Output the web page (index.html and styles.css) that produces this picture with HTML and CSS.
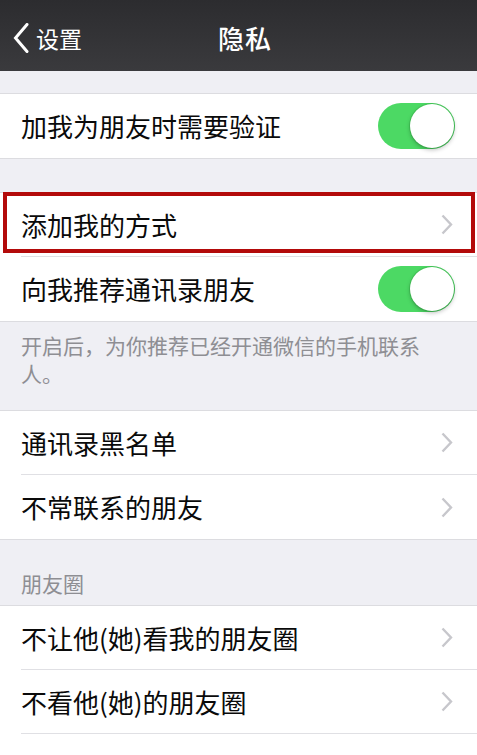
FILE: index.html
```html
<!DOCTYPE html>
<html lang="zh-CN">
<head>
<meta charset="utf-8">
<title>隐私</title>
<link rel="stylesheet" href="styles.css">
</head>
<body>
<header class="nav">
  <a class="back">
    <svg class="back-icon" width="16" height="30" viewBox="0 0 16 30"><polyline points="14,1.5 2.5,15 14,28.5" fill="none" stroke="#fff" stroke-width="3" stroke-linejoin="miter" stroke-linecap="round"/></svg>
    <span>设置</span>
  </a>
  <h1 class="title">隐私</h1>
  <div class="nav-right"></div>
</header>

<main class="page">
  <div class="spacer-top"></div>

  <section class="group">
    <div class="row">
      <div class="row-inner">
        <span class="label">加我为朋友时需要验证</span>
        <span class="switch on"><span class="knob"></span></span>
      </div>
    </div>
  </section>

  <div class="gap"></div>

  <section class="group">
    <div class="row highlighted">
      <div class="row-inner">
        <span class="label">添加我的方式</span>
        <svg class="chev" width="12" height="21" viewBox="0 0 12 21"><polyline points="1.5,1.5 10,10.5 1.5,19.5" fill="none" stroke="#c7c7cc" stroke-width="2.4"/></svg>
      </div>
    </div>
    <div class="row">
      <div class="row-inner">
        <span class="label">向我推荐通讯录朋友</span>
        <span class="switch on"><span class="knob"></span></span>
      </div>
    </div>
  </section>

  <p class="footer">开启后，为你推荐已经开通微信的手机联系人。</p>

  <section class="group">
    <div class="row">
      <div class="row-inner">
        <span class="label">通讯录黑名单</span>
        <svg class="chev" width="12" height="21" viewBox="0 0 12 21"><polyline points="1.5,1.5 10,10.5 1.5,19.5" fill="none" stroke="#c7c7cc" stroke-width="2.4"/></svg>
      </div>
    </div>
    <div class="row">
      <div class="row-inner">
        <span class="label">不常联系的朋友</span>
        <svg class="chev" width="12" height="21" viewBox="0 0 12 21"><polyline points="1.5,1.5 10,10.5 1.5,19.5" fill="none" stroke="#c7c7cc" stroke-width="2.4"/></svg>
      </div>
    </div>
  </section>

  <div class="section-header">朋友圈</div>

  <section class="group">
    <div class="row">
      <div class="row-inner">
        <span class="label">不让他(她)看我的朋友圈</span>
        <svg class="chev" width="12" height="21" viewBox="0 0 12 21"><polyline points="1.5,1.5 10,10.5 1.5,19.5" fill="none" stroke="#c7c7cc" stroke-width="2.4"/></svg>
      </div>
    </div>
    <div class="row">
      <div class="row-inner">
        <span class="label">不看他(她)的朋友圈</span>
        <svg class="chev" width="12" height="21" viewBox="0 0 12 21"><polyline points="1.5,1.5 10,10.5 1.5,19.5" fill="none" stroke="#c7c7cc" stroke-width="2.4"/></svg>
      </div>
    </div>
    <div class="row">
      <div class="row-inner"></div>
    </div>
  </section>
</main>
</body>
</html>
```

FILE: styles.css
```css
* { box-sizing: border-box; }

html, body {
  margin: 0;
  padding: 0;
}

body {
  background: #efeff4;
  font-family: "Noto Sans CJK SC", "Noto Sans", sans-serif;
  color: #000;
  overflow: hidden;
}

.nav {
  height: 71px;
  background: linear-gradient(#2c2c2f, #3a3a3d);
  display: grid;
  grid-template-columns: 1fr auto 1fr;
  align-items: center;
  padding: 5px 0 0 13px;
  color: #fff;
}

.back {
  display: flex;
  align-items: center;
  gap: 7px;
  font-size: 23px;
  line-height: 1;
  color: #fff;
}

.back-icon { display: block; }

.title {
  margin: 0;
  font-size: 26px;
  font-weight: 500;
  line-height: 1;
  letter-spacing: 1px;
}

.spacer-top { height: 22px; }
.gap { height: 33px; }

.group {
  background: #fff;
  border-top: 1px solid #dcdce0;
  border-bottom: 1px solid #dcdce0;
}

.row {
  padding-left: 21px;
  position: relative;
}

.row-inner {
  height: 64px;
  display: flex;
  align-items: center;
  justify-content: space-between;
  padding-right: 22px;
  border-bottom: 1px solid #e0e0e4;
}

.row:last-child .row-inner { border-bottom: none; }

.label {
  font-size: 26px;
  line-height: 1;
  color: #0a0a0a;
}

.chev {
  display: block;
  margin-right: 2px;
}

.highlighted::after {
  content: "";
  position: absolute;
  left: 3px;
  right: 2px;
  top: -1px;
  bottom: 4px;
  border: 4px solid #b30a0a;
  pointer-events: none;
}

.switch {
  width: 77px;
  height: 46px;
  border-radius: 23px;
  background: #4cd964;
  position: relative;
  display: flex;
  align-items: center;
  justify-content: flex-end;
  padding: 1px;
}

.knob {
  width: 44px;
  height: 44px;
  border-radius: 50%;
  background: #fff;
  box-shadow: 0 2px 4px rgba(0, 0, 0, 0.25), 0 0 0 1px rgba(0, 80, 0, 0.12);
}

.footer {
  margin: 0;
  padding: 9px 22px 23px 21px;
  font-size: 21px;
  line-height: 28px;
  color: #8e8e93;
}

.section-header {
  padding: 29px 21px 8px;
  font-size: 21px;
  line-height: 28px;
  color: #8e8e93;
}
```
